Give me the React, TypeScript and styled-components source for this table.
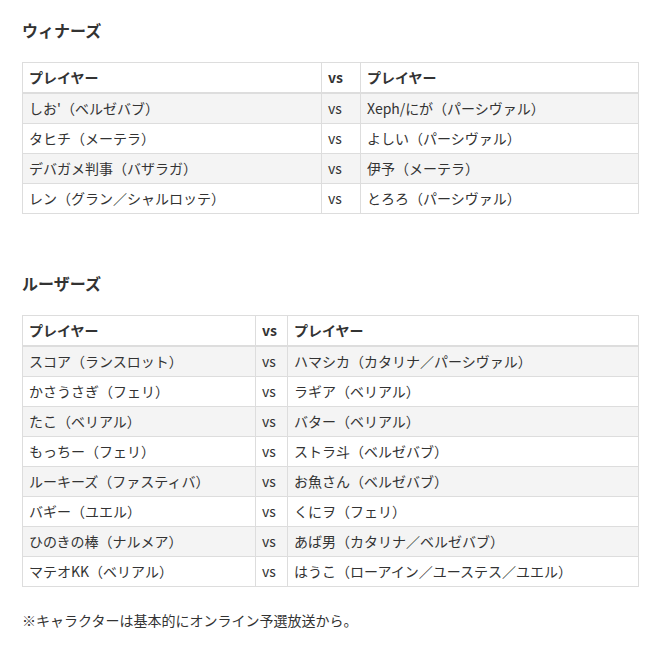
import React from "react";
import styled, { createGlobalStyle } from "styled-components";

const GlobalStyle = createGlobalStyle`
  body {
    margin: 0;
    background: #fff;
    font-family: "Noto Sans CJK JP", "Noto Sans", sans-serif;
    color: #333;
  }
`;

const Page = styled.div`
  padding: 18px 20px 0 22px;
`;

const Heading = styled.h3<{ $first?: boolean }>`
  font-size: 16px;
  line-height: 24px;
  font-weight: 700;
  margin: ${(p) => (p.$first ? "0" : "57px")} 0 20px;
`;

const Table = styled.table`
  width: 617px;
  border-collapse: collapse;
  table-layout: fixed;
  font-size: 14px;
`;

// widths are content widths (padding and border not included)
const HeadCell = styled.th<{ $w?: number }>`
  width: ${(p) => (p.$w ? `${p.$w}px` : "auto")};
  text-align: left;
  font-weight: 700;
  height: 27px;
  padding: 0 6px 2px;
  border: 1px solid #ddd;
  border-bottom: 2px solid #ddd;
  line-height: 20px;
`;

const Row = styled.tr`
  &:nth-child(odd) {
    background: #f4f4f4;
  }
`;

const Cell = styled.td`
  height: 27px;
  padding: 0 6px 2px;
  border: 1px solid #ddd;
  line-height: 20px;
  white-space: nowrap;
`;

const Note = styled.p`
  margin: 23px 0 0;
  font-size: 14px;
  line-height: 20px;
`;

type Match = [string, string];

const winners: Match[] = [
  ["しお'（ベルゼバブ）", "Xeph/にが（パーシヴァル）"],
  ["タヒチ（メーテラ）", "よしい（パーシヴァル）"],
  ["デバガメ判事（バザラガ）", "伊予（メーテラ）"],
  ["レン（グラン／シャルロッテ）", "とろろ（パーシヴァル）"],
];

const losers: Match[] = [
  ["スコア（ランスロット）", "ハマシカ（カタリナ／パーシヴァル）"],
  ["かさうさぎ（フェリ）", "ラギア（ベリアル）"],
  ["たこ（ベリアル）", "バター（ベリアル）"],
  ["もっちー（フェリ）", "ストラ斗（ベルゼバブ）"],
  ["ルーキーズ（ファスティバ）", "お魚さん（ベルゼバブ）"],
  ["バギー（ユエル）", "くにヲ（フェリ）"],
  ["ひのきの棒（ナルメア）", "あば男（カタリナ／ベルゼバブ）"],
  ["マテオKK（ベリアル）", "はうこ（ローアイン／ユーステス／ユエル）"],
];

const MatchTable = ({ rows, w1, w2 }: { rows: Match[]; w1: number; w2: number }) => (
  <Table>
    <thead>
      <tr>
        <HeadCell $w={w1}>プレイヤー</HeadCell>
        <HeadCell $w={w2}>vs</HeadCell>
        <HeadCell>プレイヤー</HeadCell>
      </tr>
    </thead>
    <tbody>
      {rows.map(([a, b], i) => (
        <Row key={i}>
          <Cell>{a}</Cell>
          <Cell>vs</Cell>
          <Cell>{b}</Cell>
        </Row>
      ))}
    </tbody>
  </Table>
);

export default function App() {
  return (
    <Page>
      <GlobalStyle />
      <Heading $first>ウィナーズ</Heading>
      <MatchTable rows={winners} w1={286} w2={26} />
      <Heading>ルーザーズ</Heading>
      <MatchTable rows={losers} w1={220} w2={19} />
      <Note>※キャラクターは基本的にオンライン予選放送から。</Note>
    </Page>
  );
}
